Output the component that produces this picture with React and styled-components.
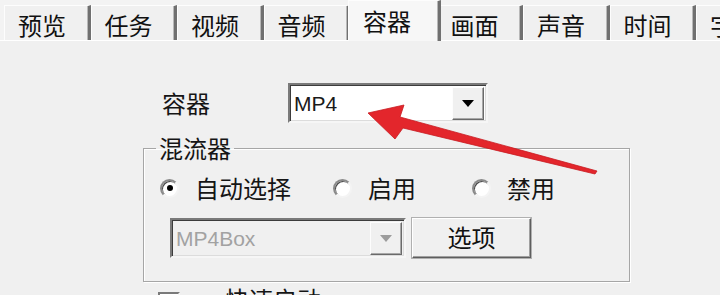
import React from 'react';
import styled, { createGlobalStyle } from 'styled-components';

const GlobalStyle = createGlobalStyle`
  html, body {
    margin: 0;
    padding: 0;
    background: #f0f0f0;
  }
  body {
    font-family: 'Noto Sans CJK SC', 'Noto Sans', sans-serif;
    color: #151515;
  }
`;

const Window = styled.div`
  position: relative;
  width: 720px;
  height: 295px;
  overflow: hidden;
  background: #f0f0f0;
`;

const TabBar = styled.ul`
  display: flex;
  align-items: flex-end;
  height: 40px;
  margin: 0;
  padding: 0 0 0 4px;
  list-style: none;
  border-bottom: 1px solid #ffffff;
  background: #f3f3f3;
`;

const Tab = styled.li`
  position: relative;
  flex: none;
  box-sizing: border-box;
  display: flex;
  align-items: center;
  width: ${p => (p.$active ? '92.5px' : '86.5px')};
  height: ${p => (p.$active ? '41px' : '35px')};
  margin: ${p => (p.$active ? '0 -4px -1px -2px' : '0')};
  padding: ${p => (p.$active ? '0 0 1px 14px' : '3px 0 0 13px')};
  z-index: ${p => (p.$active ? 1 : 0)};
  background: ${p => (p.$active ? '#f7f7f7' : '#f0f0f0')};
  border-top: 1px solid #fdfdfd;
  border-left: 1px solid #fdfdfd;
  border-right: 3px solid #707070;
  box-shadow: inset -1px 0 0 #b8b8b8;
  font-size: 24px;
  line-height: 26px;
  color: #111;
  white-space: nowrap;
`;

const Panel = styled.div`
  padding-left: 143px;
`;

const FieldRow = styled.div`
  display: flex;
  align-items: center;
  margin-top: 42px;
  padding-left: 19px;
`;

const Label = styled.span`
  width: 126px;
  font-size: 24px;
  line-height: 26px;
`;

const Combo = styled.div`
  box-sizing: border-box;
  display: flex;
  align-items: center;
  width: ${p => p.$width}px;
  height: 40px;
  padding: 0 2px 0 4px;
  background: ${p => (p.$disabled ? '#f0f0f0' : '#ffffff')};
  border: 2px solid;
  border-color: #7a7a7a #f6f6f6 #f6f6f6 #7a7a7a;
  box-shadow: inset 1px 1px 0 #3c3c3c, inset -1px -1px 0 #dcdcdc;
`;

const ComboText = styled.span`
  flex: 1;
  font-family: 'Liberation Sans', Arial, sans-serif;
  font-size: 21px;
  line-height: 24px;
  color: ${p => (p.$disabled ? '#a2a2a2' : '#1a1a1a')};
  padding-top: 2px;
`;

const DropButton = styled.div`
  box-sizing: border-box;
  display: flex;
  align-items: center;
  justify-content: center;
  width: 32px;
  height: 33px;
  background: #f0f0f0;
  border: 1px solid;
  border-color: #fdfdfd #6a6a6a #6a6a6a #fdfdfd;
  box-shadow: inset -1px -1px 0 #a8a8a8;
`;

const Caret = styled.span`
  width: 0;
  height: 0;
  border-left: 6px solid transparent;
  border-right: 6px solid transparent;
  border-top: 7px solid ${p => (p.$disabled ? '#9c9c9c' : '#000000')};
`;

const GroupBox = styled.fieldset`
  box-sizing: border-box;
  width: 487px;
  height: 146px;
  margin: 13px 0 0 0;
  padding: 0;
  border: 1px solid #a6a6a6;
  box-shadow: inset 1px 1px 0 #ffffff, 1px 1px 0 #ffffff;
`;

const Legend = styled.legend`
  margin-left: 12px;
  padding: 0 3px;
  font-size: 24px;
  line-height: 24px;
`;

const RadioRow = styled.div`
  display: flex;
  align-items: center;
  height: 24px;
  margin-top: 16px;
  padding-left: 16px;
`;

const RadioItem = styled.label`
  display: flex;
  align-items: center;
  width: ${p => (p.$width ? `${p.$width}px` : 'auto')};
  font-size: 24px;
  line-height: 26px;
`;

const RadioDot = styled.span`
  box-sizing: border-box;
  display: flex;
  align-items: center;
  justify-content: center;
  width: 19px;
  height: 19px;
  margin-right: 16px;
  border-radius: 50%;
  background: #ffffff;
  border: 2px solid;
  border-color: #8a8a8a #f4f4f4 #f4f4f4 #8a8a8a;
  box-shadow: inset 1px 1px 0 #4a4a4a;

  &::after {
    content: '';
    display: ${p => (p.$checked ? 'block' : 'none')};
    width: 6px;
    height: 6px;
    border-radius: 50%;
    background: #000;
  }
`;

const MuxRow = styled.div`
  display: flex;
  align-items: center;
  margin-top: 18px;
  padding-left: 26px;
`;

const Button = styled.button`
  box-sizing: border-box;
  width: 119px;
  height: 40px;
  margin-left: 6px;
  padding: 0 0 2px 0;
  background: #f0f0f0;
  border: 1px solid;
  border-color: #ffffff #5e5e5e #5e5e5e #ffffff;
  box-shadow: inset -1px -1px 0 #a0a0a0, 0 0 0 1px #b0b0b0;
  font-family: 'Noto Sans CJK SC', sans-serif;
  font-size: 24px;
  line-height: 26px;
  color: #111;
`;

const CheckRow = styled.div`
  display: flex;
  align-items: flex-start;
  margin-top: 10px;
  padding-left: 15px;
`;

const CheckBox = styled.span`
  box-sizing: border-box;
  width: 22px;
  height: 22px;
  margin-right: 45px;
  background: #ffffff;
  border: 2px solid;
  border-color: #7a7a7a #f6f6f6 #f6f6f6 #7a7a7a;
`;

const CheckText = styled.span`
  margin-top: -6px;
  font-size: 24px;
  line-height: 26px;
`;

const ArrowLayer = styled.svg`
  position: absolute;
  left: 0;
  top: 0;
  pointer-events: none;
`;

const tabs = ['预览', '任务', '视频', '音频', '容器', '画面', '声音', '时间', '字幕'];

function Arrow() {
  return (
    <ArrowLayer width="720" height="295" viewBox="0 0 720 295">
      <polygon
        points="368,113 404,105 400,117 597,171 595,174 403,128 395,139"
        fill="#e3262c"
        stroke="#c81c22"
        strokeWidth="0.8"
        strokeLinejoin="round"
      />
    </ArrowLayer>
  );
}

export default function App() {
  return (
    <>
      <GlobalStyle />
      <Window>
        <TabBar>
          {tabs.map(t => (
            <Tab key={t} $active={t === '容器'}>{t}</Tab>
          ))}
        </TabBar>
        <Panel>
          <FieldRow>
            <Label>容器</Label>
            <Combo $width={200}>
              <ComboText>MP4</ComboText>
              <DropButton><Caret /></DropButton>
            </Combo>
          </FieldRow>
          <GroupBox>
            <Legend>混流器</Legend>
            <RadioRow>
              <RadioItem $width={173}><RadioDot $checked />自动选择</RadioItem>
              <RadioItem $width={139}><RadioDot />启用</RadioItem>
              <RadioItem><RadioDot />禁用</RadioItem>
            </RadioRow>
            <MuxRow>
              <Combo $width={236} $disabled>
                <ComboText $disabled>MP4Box</ComboText>
                <DropButton><Caret $disabled /></DropButton>
              </Combo>
              <Button>选项</Button>
            </MuxRow>
          </GroupBox>
          <CheckRow>
            <CheckBox />
            <CheckText>快速启动</CheckText>
          </CheckRow>
        </Panel>
        <Arrow />
      </Window>
    </>
  );
}
